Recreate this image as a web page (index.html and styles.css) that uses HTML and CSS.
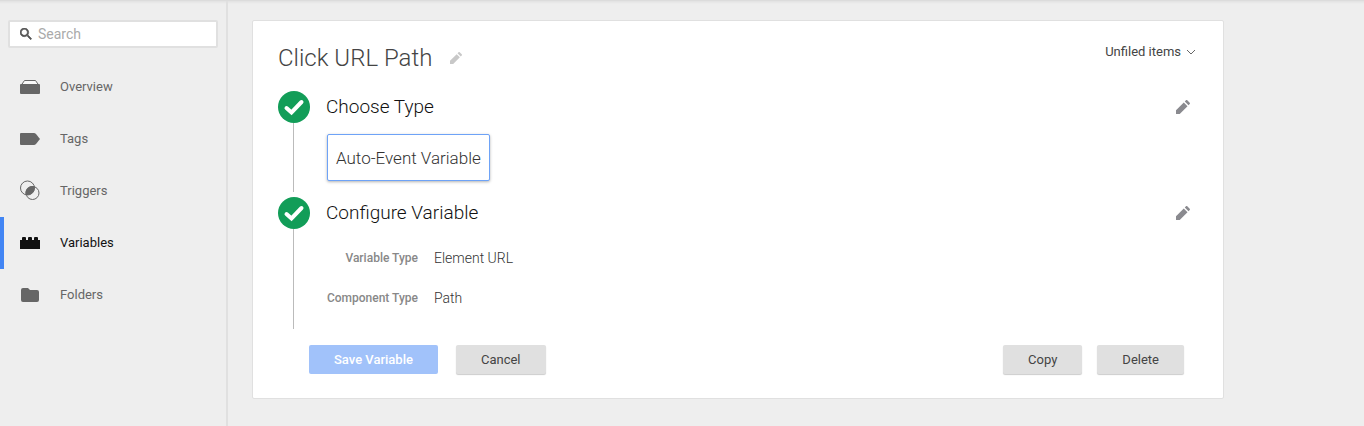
FILE: index.html
```html
<!DOCTYPE html>
<html lang="en">
<head>
    <meta charset="UTF-8">
    <meta name="viewport" content="width=device-width, initial-scale=1.0">
    <title>Click URL Path</title>
    <link rel="stylesheet" href="styles.css">
</head>
<body>
    <!-- Shared icon shapes -->
    <svg class="sprite" aria-hidden="true">
        <symbol id="pencil" viewBox="3 3 18 18">
            <path d="M3 16.200V21h4.800L17.800 11l-4.800-4.800L3 16.200zM20.600 8.200c.5-.5.5-1.200 0-1.700l-3.100-3.100c-.5-.5-1.200-.5-1.700 0L14.300 4.900l4.800 4.800 1.500-1.500z"/>
        </symbol>
        <symbol id="check" viewBox="0 0 32 32">
            <circle cx="16" cy="16" r="16" fill="#129d58"/>
            <path d="M8.500 17l5 4.500L23.500 11" fill="none" stroke="#fff" stroke-width="4" stroke-linecap="round"/>
        </symbol>
    </svg>

    <div class="page">
        <aside class="sidebar">
            <form class="search">
                <svg class="search-icon" viewBox="3 3 18 18"><path d="M15.5 14h-.79l-.28-.27A6.47 6.47 0 0 0 16 9.5 6.5 6.5 0 1 0 9.5 16c1.61 0 3.09-.59 4.23-1.57l.27.28v.79l5 4.99L20.49 19l-4.99-5zm-6 0C7.01 14 5 11.99 5 9.5S7.01 5 9.5 5 14 7.01 14 9.5 11.99 14 9.5 14z"/></svg>
                <input type="text" placeholder="Search" aria-label="Search">
            </form>
            <nav class="menu">
                <a href="#" class="menu-item">
                    <svg class="menu-icon" viewBox="0 0 20 20"><path d="M1 9.500L4.500 4.500h11L19 9.500" fill="#f8f8f8" stroke="#666"/><path d="M0 9q0-1 1-1h18q1 0 1 1v8q0 1-1 1H1q-1 0-1-1z"/></svg>
                    Overview
                </a>
                <a href="#" class="menu-item">
                    <svg class="menu-icon" viewBox="0 0 20 20"><path d="M1 5h13q1 0 2 1l4 5-4 5q-1 1-2 1H1q-1 0-1-1V6q0-1 1-1z"/></svg>
                    Tags
                </a>
                <a href="#" class="menu-item">
                    <svg class="menu-icon" viewBox="0 0 20 20"><g fill="none" stroke="#666"><circle cx="7.500" cy="8" r="7"/><circle cx="12.500" cy="13" r="6.500"/></g><path d="M14.300 6.200A7 7 0 0 1 5.700 14.800A7 7 0 0 1 14.300 6.200z"/></svg>
                    Triggers
                </a>
                <a href="#" class="menu-item active">
                    <svg class="menu-icon" viewBox="0 0 20 20"><path d="M0 8h2V6q0-1 1-1h2q1 0 1 1v2h2V6q0-1 1-1h2q1 0 1 1v2h2V6q0-1 1-1h2q1 0 1 1v2h2v9H0z"/></svg>
                    Variables
                </a>
                <a href="#" class="menu-item">
                    <svg class="menu-icon" viewBox="0 0 20 20"><path d="M3 4h5l2 2h7q2 0 2 2v8q0 2-2 2H3q-2 0-2-2V6q0-2 2-2z"/></svg>
                    Folders
                </a>
            </nav>
        </aside>

        <main class="content">
            <section class="card">
                <header class="card-header">
                    <h1>Click URL Path</h1>
                    <button type="button" class="icon-btn rename" aria-label="Rename"><svg><use href="#pencil"/></svg></button>
                    <button type="button" class="folder-btn">
                        Unfiled items
                        <svg viewBox="0 0 10 6"><path d="M1 1l4 4 4-4" fill="none" stroke="#666"/></svg>
                    </button>
                </header>

                <div class="step">
                    <div class="step-marker"><svg><use href="#check"/></svg></div>
                    <div class="step-body">
                        <h2>Choose Type</h2>
                        <button type="button" class="type-btn">Auto-Event Variable</button>
                    </div>
                    <button type="button" class="icon-btn" aria-label="Edit type"><svg><use href="#pencil"/></svg></button>
                </div>

                <div class="step">
                    <div class="step-marker"><svg><use href="#check"/></svg></div>
                    <div class="step-body">
                        <h2>Configure Variable</h2>
                        <dl class="fields">
                            <dt>Variable Type</dt>
                            <dd>Element URL</dd>
                            <dt>Component Type</dt>
                            <dd>Path</dd>
                        </dl>
                    </div>
                    <button type="button" class="icon-btn" aria-label="Edit configuration"><svg><use href="#pencil"/></svg></button>
                </div>

                <footer class="actions">
                    <button type="button" class="btn btn-primary">Save Variable</button>
                    <button type="button" class="btn">Cancel</button>
                    <button type="button" class="btn btn-copy">Copy</button>
                    <button type="button" class="btn">Delete</button>
                </footer>
            </section>
        </main>
    </div>
</body>
</html>
```
FILE: styles.css
```css
* {
    box-sizing: border-box;
}

body {
    margin: 0;
    font-family: Roboto, sans-serif;
    font-size: 13px;
    color: #444;
    background-color: #eee;
}

button {
    font-family: inherit;
    cursor: pointer;
}

h1, h2 {
    margin: 0;
    font-weight: 300;
}

.sprite {
    display: none;
}

.page {
    display: flex;
    min-height: 100vh;
    border-top: 1px solid #dcdcdc;
    background: linear-gradient(#e2e2e2, #eee 3px);
}

/* Sidebar */
.sidebar {
    flex: none;
    width: 228px;
    padding-top: 19px;
    border-right: 2px solid #e0e0e0;
}

.search {
    display: flex;
    align-items: center;
    gap: 6px;
    height: 28px;
    margin: 0 8px 13px;
    padding: 0 10px;
    background-color: #fff;
    border: 2px solid #e0e0e0;
    border-radius: 2px;
}

.search-icon {
    flex: none;
    width: 12px;
    height: 12px;
    fill: #555;
    stroke: #555;
    stroke-width: 1px;
}

.search input {
    width: 100%;
    padding: 0;
    border: none;
    outline: none;
    font: 14px Roboto, sans-serif;
    color: #333;
}

.search input::placeholder {
    color: #aaa;
}

.menu-item {
    display: flex;
    align-items: center;
    gap: 20px;
    height: 52px;
    padding: 0 0 2px 16px;
    border-left: 4px solid transparent;
    color: #666;
    text-decoration: none;
}

.menu-item.active {
    border-left-color: #4285f4;
    color: #111;
}

.menu-icon {
    width: 20px;
    height: 20px;
    fill: currentColor;
}

/* Card */
.content {
    flex: 1;
    padding: 19px 24px;
}

.card {
    max-width: 972px;
    padding: 21px 25px 24px;
    background-color: #fff;
    border: 1px solid #e0e0e0;
    border-radius: 2px;
}

.card-header {
    display: flex;
    align-items: center;
    height: 32px;
    margin-bottom: 17px;
}

h1 {
    font-size: 24px;
    line-height: 32px;
}

h2 {
    font-size: 19px;
    line-height: 32px;
    color: #111;
}

.icon-btn {
    display: flex;
    align-items: center;
    justify-content: flex-end;
    width: 32px;
    height: 32px;
    padding: 0 8px;
    border: none;
    background: none;
}

.icon-btn svg {
    width: 14px;
    height: 14px;
    fill: #8a8a8f;
}

.rename {
    margin-left: 6px;
}

.rename svg {
    width: 12px;
    height: 12px;
    fill: #c8c8c8;
}

.folder-btn {
    display: flex;
    align-items: center;
    align-self: flex-start;
    gap: 5px;
    margin-left: auto;
    padding: 2px;
    border: none;
    background: none;
    font-size: 13px;
    color: #444;
}

.folder-btn svg {
    width: 10px;
    height: 6px;
}

.step {
    display: flex;
    margin-bottom: 5px;
}

.step-marker {
    display: flex;
    flex-direction: column;
    width: 32px;
    margin-right: 16px;
}

.step-marker svg {
    width: 32px;
    height: 32px;
}

.step-marker::after {
    content: "";
    flex: 1;
    width: 1px;
    margin-left: 15px;
    background-color: #bbb;
}

.step-body {
    flex: 1;
}

.type-btn {
    display: block;
    height: 47px;
    margin: 11px 0 11px 1px;
    padding: 0 8px;
    border: 1px solid #6ea3f7;
    border-radius: 2px;
    background-color: #fff;
    box-shadow: 0 1px 3px rgba(0, 0, 0, 0.3);
    font-size: 17px;
    font-weight: 300;
    color: #333;
}

.fields {
    display: grid;
    grid-template-columns: 92px 1fr;
    column-gap: 16px;
    margin: 9px 0 11px;
    line-height: 40px;
}

.fields dt {
    font-size: 12px;
    font-weight: 500;
    text-align: right;
    white-space: nowrap;
    color: #888;
}

.fields dd {
    margin: 0;
    font-size: 14px;
    font-weight: 300;
    color: #333;
}

.actions {
    display: flex;
    margin: 16px 14px 0 31px;
}

.btn {
    height: 29px;
    padding: 0 25px;
    border: none;
    border-radius: 2px;
    background-color: #e0e0e0;
    box-shadow: 0 1px 1px rgba(0, 0, 0, 0.2);
    font-size: 13px;
    color: #444;
}

.btn-primary {
    margin-right: 18px;
    background-color: #a1c2fa;
    box-shadow: none;
    font-weight: 500;
    color: #fff;
}

.btn-copy {
    margin-left: auto;
    margin-right: 15px;
}
```
